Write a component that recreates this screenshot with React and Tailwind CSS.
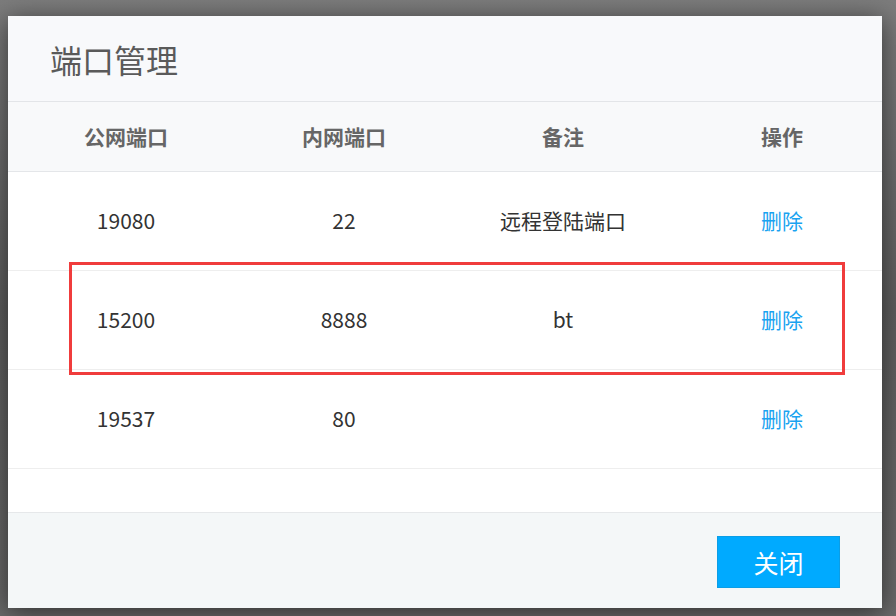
import React from 'react'

const rows = [
  { pub: '19080', lan: '22', note: '远程登陆端口' },
  { pub: '15200', lan: '8888', note: 'bt' },
  { pub: '19537', lan: '80', note: '' },
]

const cols = 'grid grid-cols-[236px_200px_238px_1fr] items-center text-center'

function PortDialog() {
  return (
    <div className="w-[874px] h-[592px] flex flex-col bg-white shadow-[0_4px_24px_rgba(0,0,0,0.55)]">
      {/* header */}
      <div className="h-[86px] shrink-0 flex items-center pl-[42px] bg-[#f8f9fb] border-b border-[#e3e5e8]">
        <h1 className="text-[32px] text-[#5a5a5a] leading-none">端口管理</h1>
      </div>
      {/* table head */}
      <div className={`${cols} h-[70px] shrink-0 bg-[#f8f9fa] border-b border-[#e4e6e9] text-[21px] font-bold text-[#666]`}>
        <div>公网端口</div>
        <div>内网端口</div>
        <div>备注</div>
        <div>操作</div>
      </div>
      {rows.map((r) => (
        <div key={r.pub} className={`${cols} h-[99px] shrink-0 border-b border-[#eeeeee] text-[21px] text-[#333]`}>
          <div>{r.pub}</div>
          <div>{r.lan}</div>
          <div>{r.note}</div>
          <div><a className="text-[#1aa3f0] cursor-pointer">删除</a></div>
        </div>
      ))}
      <div className="flex-1"></div>
      {/* footer */}
      <div className="h-[96px] shrink-0 border-t border-[#e6e8ea] bg-[#f4f7f8] flex justify-end items-start pt-[23px] pr-[42px]">
        <button className="w-[123px] h-[52px] bg-[#00aaff] border border-[#0b9ee6] text-white text-[25px] leading-none">关闭</button>
      </div>
    </div>
  )
}

export default function App() {
  return (
    <div
      className="relative w-[896px] h-[616px] overflow-hidden bg-gradient-to-b from-[#7c7c7c] via-[#5e5e5e] to-[#6a6a6a] pt-[16px] pl-[8px]"
      style={{ fontFamily: '"Noto Sans CJK SC", "Noto Sans", sans-serif' }}
    >
      <PortDialog />
      <div className="absolute left-[69px] top-[262px] w-[776px] h-[113px] border-[3px] border-[#f03c3c]"></div>
    </div>
  )
}
